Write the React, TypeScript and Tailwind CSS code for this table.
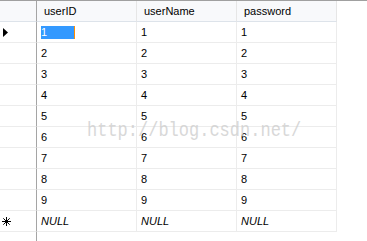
import React from "react";

const rows = ["1", "2", "3", "4", "5", "6", "7", "8", "9"];

function Arrow() {
  return (
    <svg width="6" height="9" viewBox="0 0 6 9" className="block">
      <path d="M0 0 L5 4.5 L0 9 Z" fill="#000" />
    </svg>
  );
}

function Star() {
  return (
    <svg width="9" height="9" viewBox="0 0 9 9" className="block">
      <g stroke="#000" strokeWidth="1" shapeRendering="crispEdges">
        <line x1="4.5" y1="0" x2="4.5" y2="9" />
        <line x1="0" y1="4.5" x2="9" y2="4.5" />
      </g>
      <g stroke="#000" strokeWidth="1">
        <line x1="1.3" y1="1.3" x2="7.7" y2="7.7" />
        <line x1="7.7" y1="1.3" x2="1.3" y2="7.7" />
      </g>
    </svg>
  );
}

export default function App() {
  const cell = "w-[100px] h-[21px] border-r border-b border-[#ececec] flex items-center pl-[4px] shrink-0";
  return (
    <div
      className="relative w-[367px] h-[241px] bg-white overflow-hidden text-[11px] text-black"
      style={{ fontFamily: "Tahoma, 'Liberation Sans', Arial, sans-serif" }}
    >
      <div className="h-px w-full bg-[#a0a0a0]" />
      <div className="flex flex-col w-[337px]">
        <div className="flex bg-[#f8f9fb]">
          <div className="w-[37px] h-[21px] border-r border-b border-r-[#a5a5a5] border-b-[#dde3ea] shrink-0" />
          {["userID", "userName", "password"].map((h) => (
            <div
              key={h}
              className="w-[100px] h-[21px] border-r border-b border-r-[#e6e6e6] border-b-[#dde3ea] flex items-center pl-[7px] shrink-0"
            >
              {h}
            </div>
          ))}
        </div>
        {rows.map((r, i) => (
          <div key={r} className="flex">
            <div className="w-[37px] h-[21px] border-r border-b border-r-[#a5a5a5] border-b-[#ececec] flex items-center pl-[3px] shrink-0">
              {i === 0 ? <Arrow /> : null}
            </div>
            <div className={cell}>
              {i === 0 ? (
                <span className="flex items-center h-[13px] w-[34px] bg-[#3399ff] text-white border-r border-[#ff8c00]">
                  {r}
                </span>
              ) : (
                r
              )}
            </div>
            <div className={cell}>{r}</div>
            <div className={cell}>{r}</div>
          </div>
        ))}
        <div className="flex">
          <div className="w-[37px] h-[21px] border-r border-b border-r-[#a5a5a5] border-b-[#ececec] flex items-center pl-[2px] shrink-0">
            <Star />
          </div>
          {[0, 1, 2].map((k) => (
            <div key={k} className={cell + " italic"}>
              NULL
            </div>
          ))}
        </div>
      </div>
      <div className="w-[37px] h-[10px] border-r border-[#a5a5a5]" />
      <div
        className="absolute left-[87px] top-[119px] text-[17px] leading-[20px] text-[#cfcfcf] opacity-80 scale-y-[1.2] origin-top whitespace-nowrap pointer-events-none"
        style={{ fontFamily: "'Liberation Mono', 'Courier New', monospace" }}
      >
        http://blog.csdn.net/
      </div>
    </div>
  );
}
